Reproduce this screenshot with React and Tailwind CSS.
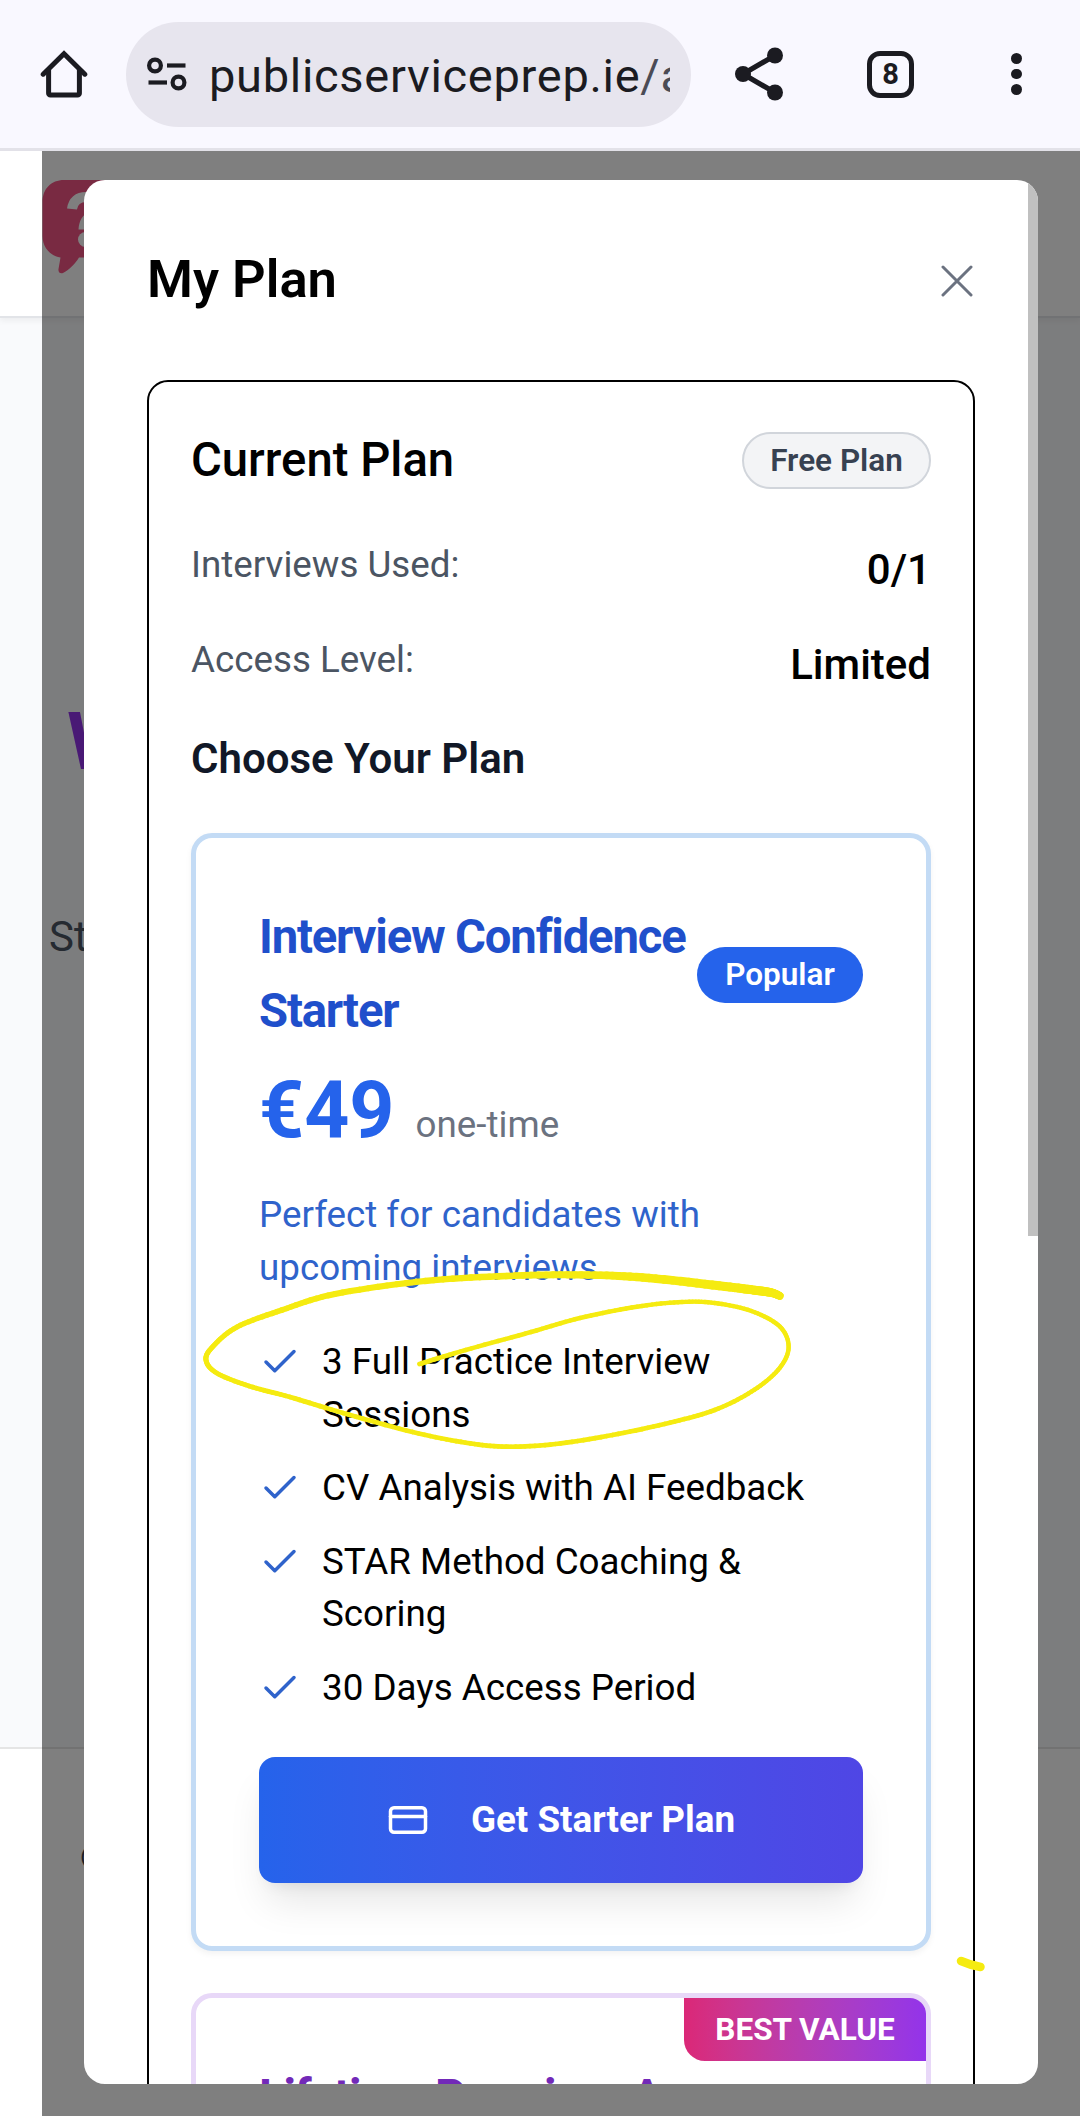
import React from "react";
import { Check, CreditCard } from "lucide-react";

const features = [
  "3 Full Practice Interview Sessions",
  "CV Analysis with AI Feedback",
  "STAR Method Coaching & Scoring",
  "30 Days Access Period",
];

function HomeIcon() {
  return (
    <svg viewBox="0 0 48 48" className="h-12 w-12 shrink-0" fill="none" stroke="#1b1b21" strokeWidth="5" strokeLinecap="round" strokeLinejoin="round">
      <path d="M3.200 24.200 24 3.800l20.800 20.400" strokeLinejoin="miter" />
      <path d="M8.600 20v23.200a1.800 1.800 0 0 0 1.800 1.800h27.200a1.800 1.800 0 0 0 1.800-1.800V20" />
    </svg>
  );
}

function SiteSettingsIcon() {
  return (
    <svg viewBox="0 0 40 34" className="h-[34px] w-10 shrink-0" fill="none" stroke="#1b1b21" strokeWidth="4.200">
      <circle cx="8" cy="8.500" r="5.900" />
      <path d="M20 8.500H38.500" />
      <path d="M1.500 25.500H20" />
      <circle cx="31.500" cy="25.500" r="5.900" />
    </svg>
  );
}

function ShareIcon() {
  return (
    <svg viewBox="0 0 48 54" className="h-[54px] w-12 shrink-0" fill="#1b1b21" stroke="#1b1b21">
      <path d="M40 8.500 8 27l32 18.500" fill="none" strokeWidth="5.200" />
      <circle cx="8" cy="27" r="8" stroke="none" />
      <circle cx="40" cy="8.500" r="8" stroke="none" />
      <circle cx="40" cy="45.500" r="8" stroke="none" />
    </svg>
  );
}

function BrowserBar() {
  return (
    <div className="flex h-[151px] shrink-0 items-center border-b-[3px] border-[#e3e2e9] bg-[#f9f8ff]">
      <div className="ml-[39.500px]">
        <HomeIcon />
      </div>
      <div className="ml-[38.500px] flex h-[105px] w-[565px] items-center rounded-full bg-[#e7e5ee] pl-[21px]">
        <SiteSettingsIcon />
        <div className="ml-[22px] mt-[4px] w-[461px] overflow-hidden whitespace-nowrap text-[47px] leading-[60px] tracking-[0.700px] text-[#1b1b21]">
          publicserviceprep.ie<span className="text-[#4b4b55]">/a</span>
        </div>
      </div>
      <div className="ml-[44px]">
        <ShareIcon />
      </div>
      <div className="ml-[84px] flex h-[47px] w-[47px] items-center justify-center rounded-[13px] border-[5.300px] border-[#1b1b21] text-[29px] font-bold leading-none text-[#1b1b21]">
        8
      </div>
      <div className="ml-[97px] flex flex-col gap-[5.200px]">
        <span className="h-[10.500px] w-[10.500px] rounded-full bg-[#1b1b21]" />
        <span className="h-[10.500px] w-[10.500px] rounded-full bg-[#1b1b21]" />
        <span className="h-[10.500px] w-[10.500px] rounded-full bg-[#1b1b21]" />
      </div>
    </div>
  );
}

function PageBehind() {
  return (
    <div className="flex h-full flex-col bg-white">
      <div className="z-10 h-[167px] shrink-0 border-b-2 border-[#e2e4e8] bg-white pl-[42px] pt-[29px] shadow-[0_3px_6px_rgba(0,0,0,0.05)]">
        <svg viewBox="0 0 90 94" className="h-[94px] w-[90px]">
          <path d="M22 0h60v77.500H37C33 84 27 90 21 93c-3 1-5-1-4.500-4l2-11.500C8 76 .500 67 .500 56V22C.500 9 9 0 22 0Z" fill="#f25484" />
          <path d="M30 29c1-8 6-12 14-12s14 5 14 12" fill="none" stroke="#fff" strokeWidth="10" />
          <path d="M36.500 49.500C37 42 39 38 43 34.500H60L50 49.500Z" fill="#fff" />
          <circle cx="43.500" cy="59.500" r="7.500" fill="#fff" />
        </svg>
      </div>
      <div className="h-[1429px] shrink-0 bg-[#f9fafc] pt-[374px]">
        <div className="pl-[67px] text-[80px] font-bold leading-[100px] text-[#9333ea]">W</div>
        <div className="mt-[112px] pl-[49px] text-[42px] leading-[66px] text-[#4b5563]">St</div>
      </div>
      <div className="flex-1 border-t-2 border-[#e5e5e5] pl-20 pt-[84px] text-[36.750px] leading-[52px] text-[#374151]">©</div>
    </div>
  );
}

function StarterCard() {
  return (
    <div className="mt-[43px] h-[1118px] rounded-[21px] border-[5px] border-[#c3dbf5] bg-white p-[63px] shadow-[0_3px_6px_rgba(0,0,0,0.05)]">
      <div className="flex h-[147px] items-center justify-between">
        <h3 className="w-[438px] text-[47.250px] font-bold leading-[73.500px] tracking-[-0.025em] text-[#1f4fcb]">
          Interview Confidence Starter
        </h3>
        <span className="flex h-[56px] w-[166px] shrink-0 items-center justify-center rounded-full bg-[#2563eb] text-[31.500px] font-semibold text-white">
          Popular
        </span>
      </div>
      <div className="mt-[15px] flex h-[94px] items-baseline gap-[21px] leading-[94.500px]">
        <span className="text-[78.750px] font-bold text-[#2563eb]">€49</span>
        <span className="text-[36.750px] text-[#6b7280]">one-time</span>
      </div>
      <p className="mt-[32px] w-[500px] text-[36.750px] leading-[52.500px] text-[#2f63cb]">
        Perfect for candidates with upcoming interviews
      </p>
      <ul className="mt-[42px] flex flex-col gap-[21px] text-[36.750px] leading-[52.500px] text-black">
        {features.map((feature) => (
          <li key={feature} className="flex items-start gap-[21px]">
            <Check className="mt-[5px] h-[42px] w-[42px] shrink-0 text-[#2f63cb]" />
            <span className="max-w-[500px]">{feature}</span>
          </li>
        ))}
      </ul>
      <button className="mt-[43px] flex h-[126px] w-full items-center justify-center gap-[42px] rounded-[16px] bg-linear-to-r from-[#2563eb] to-[#4f46e5] text-[36.750px] font-bold text-white shadow-[0_26px_39px_-8px_rgba(0,0,0,0.1),0_10px_16px_-10px_rgba(0,0,0,0.1)]">
        <CreditCard className="h-[42px] w-[42px]" />
        Get Starter Plan
      </button>
    </div>
  );
}

function PremiumCard() {
  return (
    <div className="relative mt-[42px] h-[400px] overflow-hidden rounded-[21px] border-[5px] border-[#e8d8f8] bg-white p-[63px]">
      <span className="absolute right-0 top-0 flex h-[63px] w-[242px] items-center justify-center rounded-bl-[21px] bg-linear-to-r from-[#db2777] to-[#9333ea] text-[31.500px] font-bold text-white">
        BEST VALUE
      </span>
      <h3 className="whitespace-nowrap text-[47.250px] font-bold leading-[73.500px] tracking-[-0.025em] text-[#7229b8]">
        Lifetime Premium Access
      </h3>
    </div>
  );
}

function PlanModal() {
  return (
    <div className="relative h-[1904px] w-[954px] overflow-hidden rounded-[21px] bg-white px-[63px] pt-[63px]">
      <div className="flex h-[72px] items-center justify-between">
        <h1 className="text-[52.500px] font-semibold leading-[72px] text-black">My Plan</h1>
        <svg viewBox="0 0 32 32" className="mr-[2px] mt-[4px] h-8 w-8" fill="none" stroke="#6b7280" strokeWidth="3" strokeLinecap="round">
          <path d="M2 2 30 30M30 2 2 30" />
        </svg>
      </div>
      <div className="mt-[65px] h-[2100px] rounded-[21px] border-2 border-black px-[42px] pt-[42px]">
        <div className="flex h-[73px] items-center justify-between">
          <h2 className="text-[47.250px] font-medium leading-[73px] text-black">Current Plan</h2>
          <span className="flex h-[57px] w-[189px] items-center justify-center rounded-full border-2 border-[#d1d5db] bg-[#f3f4f6] text-[31.500px] font-semibold text-[#374151]">
            Free Plan
          </span>
        </div>
        <dl className="mt-[41px] flex flex-col gap-8">
          <div className="flex h-[63px] items-start justify-between">
            <dt className="text-[36.750px] leading-[54px] text-[#4b5563]">Interviews Used:</dt>
            <dd className="text-[42px] font-medium leading-[63px] text-black">0/1</dd>
          </div>
          <div className="flex h-[63px] items-start justify-between">
            <dt className="text-[36.750px] leading-[54px] text-[#4b5563]">Access Level:</dt>
            <dd className="text-[42px] font-medium leading-[63px] text-black">Limited</dd>
          </div>
        </dl>
        <h2 className="mt-[31px] text-[42px] font-semibold leading-[63px] text-[#111827]">Choose Your Plan</h2>
        <StarterCard />
        <PremiumCard />
      </div>
      <div className="absolute right-0 top-0 h-[1056px] w-[10px] bg-[#c0c0c0]" />
    </div>
  );
}

// Each entry is x, y and pen width; the pen gets lighter along the stroke.
const loop = [
  [780, 1296, 7.500], [772, 1292.800, 8.500], [757, 1290.500, 9], [725, 1286.500, 9], [649, 1278, 8.500], [588, 1275, 7.500], [515, 1275.700, 6.700],
  [425, 1281, 6.300], [335, 1294, 6], [282, 1310, 5.600], [237, 1327, 5.200], [212.700, 1346.700, 5],
  [206, 1360, 5], [216.700, 1373, 4.800], [249, 1386, 4.800], [290, 1397, 4.800], [343, 1413, 4.800],
  [412.600, 1432, 4.700], [465.700, 1442.700, 4.700], [506.500, 1446.700, 4.700], [555.500, 1444, 4.700],
  [612.600, 1435, 4.700], [669.800, 1422.700, 4.700], [714.700, 1410, 4.600], [751.400, 1391.700, 4.500],
  [778, 1370, 4.400], [788.600, 1348, 4.400], [780, 1326.700, 4.400], [751.400, 1311, 4.400],
  [714.700, 1303, 4.400], [682, 1302, 4.400], [637, 1306.700, 4.500], [580, 1318, 4.500],
  [531, 1332, 4.600], [465.700, 1350, 4.600], [419.500, 1364, 4.800],
];

function samplePen(points, steps) {
  const out = [];
  for (let i = 0; i < points.length - 1; i++) {
    const a = points[Math.max(0, i - 1)];
    const b = points[i];
    const c = points[i + 1];
    const d = points[Math.min(points.length - 1, i + 2)];
    for (let s = 0; s < steps; s++) {
      const t = s / steps;
      out.push([0, 1, 2].map((k) =>
        0.5 * (2 * b[k] + (c[k] - a[k]) * t + (2 * a[k] - 5 * b[k] + 4 * c[k] - d[k]) * t * t + (3 * b[k] - a[k] - 3 * c[k] + d[k]) * t * t * t)
      ));
    }
  }
  out.push(points[points.length - 1]);
  return out;
}

function PenMarks() {
  const pts = samplePen(loop, 10);
  return (
    <svg viewBox="0 0 1080 2116" className="pointer-events-none absolute inset-0 h-full w-full" fill="none" stroke="#f5eb10" strokeLinecap="round">
      {pts.slice(1).map((p, i) => (
        <path key={i} d={`M${pts[i][0]} ${pts[i][1]}L${p[0]} ${p[1]}`} strokeWidth={p[2]} />
      ))}
      <path d="M961 1961Q970 1965 980.500 1967" strokeWidth="8.500" />
    </svg>
  );
}

export default function App() {
  return (
    <div className="relative flex h-[2116px] w-[1080px] flex-col overflow-hidden bg-white font-[Roboto,sans-serif]">
      <BrowserBar />
      <div className="relative h-[1965px]">
        <PageBehind />
        <div className="absolute inset-y-0 left-[42px] right-0 z-20 bg-black/50 pl-[42px] pt-[29px]">
          <PlanModal />
        </div>
      </div>
      <div className="pointer-events-none absolute inset-0 z-30">
        <PenMarks />
      </div>
    </div>
  );
}
